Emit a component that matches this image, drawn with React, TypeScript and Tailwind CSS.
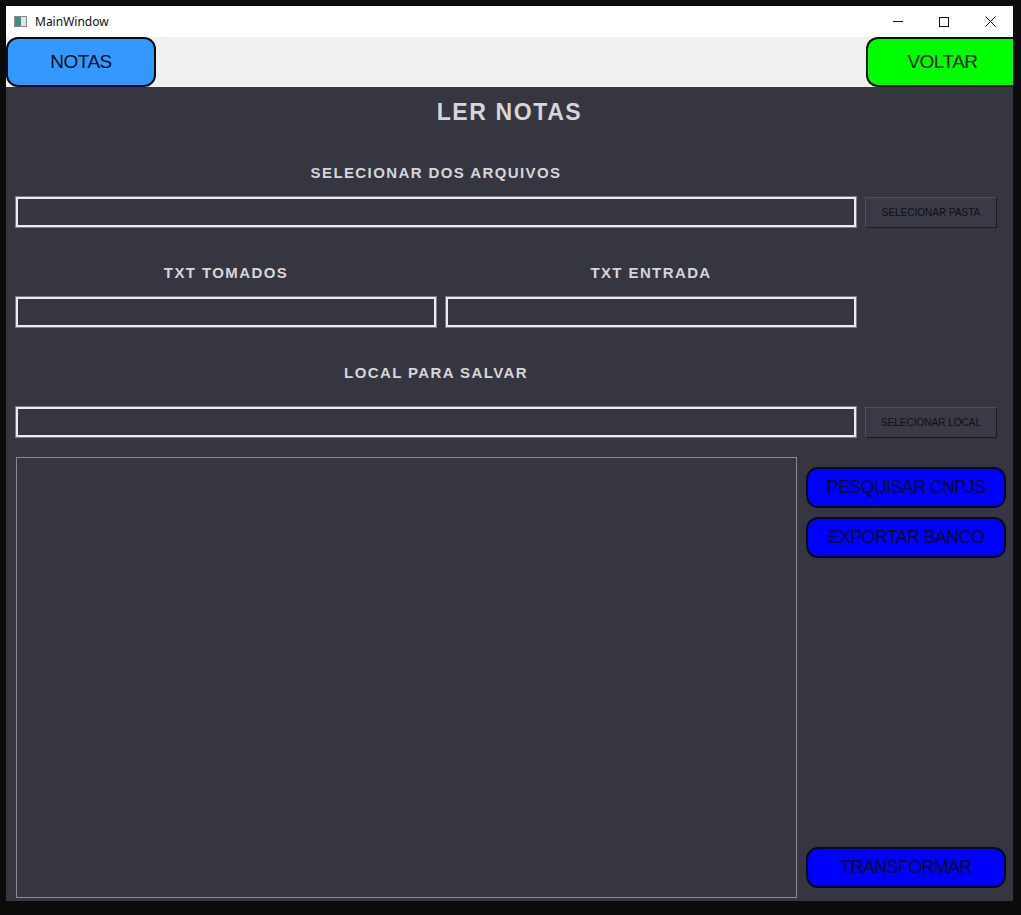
import React from 'react';

const labelCls = "text-[15px] font-bold tracking-[1.4px] text-[#d6d6d8] text-center leading-[26px] h-[26px]";
const inputCls = "h-[30px] shrink-0 bg-[#363641] border-2 border-[#ececec] outline outline-1 outline-[#7c7c82]";
const smallBtn = "w-[132px] h-[31px] shrink-0 bg-[#3a3a46] border border-t-[#4e4e5a] border-l-[#4e4e5a] border-b-[#1c1c22] border-r-[#1c1c22] text-[10px] text-[#111] flex items-center justify-center";
const blueBtn = "w-[200px] h-[41px] shrink-0 bg-[#0000ff] border-2 border-[#0a0a1a] rounded-[12px] text-[18px] tracking-[-0.7px] whitespace-nowrap text-[#0b0b2a] flex items-center justify-center";

const App: React.FC = () => {
    return (
        <div className="w-[1021px] h-[915px] bg-[#0b0b0c] pl-[6px] pt-[6px] overflow-hidden" style={{ fontFamily: '"Liberation Sans", Arial, sans-serif' }}>
            <div className="w-[1007px] flex flex-col">
                {/* Title bar */}
                <div className="h-[31px] bg-white flex items-center">
                    <div className="ml-[8px] w-[13px] h-[11px] border border-[#8a8a8a] bg-[#d8e4e8] flex">
                        <div className="w-[6px] h-full bg-[#3f8f84]" />
                    </div>
                    <span className="ml-[8px] text-[12px] text-[#111]" style={{ fontFamily: '"Noto Sans", "Liberation Sans", sans-serif' }}>MainWindow</span>
                    <div className="ml-auto flex items-center h-full">
                        <div className="w-[46px] h-full flex items-center justify-center">
                            <div className="w-[10px] h-[1px] bg-[#111]" />
                        </div>
                        <div className="w-[46px] h-full flex items-center justify-center">
                            <div className="w-[10px] h-[10px] border border-[#111]" />
                        </div>
                        <div className="w-[46px] h-full flex items-center justify-center">
                            <svg width="11" height="11" viewBox="0 0 11 11">
                                <path d="M0.5 0.5 L10.5 10.5 M10.5 0.5 L0.5 10.5" stroke="#111" strokeWidth="1" />
                            </svg>
                        </div>
                    </div>
                </div>

                {/* Toolbar */}
                <div className="h-[50px] bg-[#f0f0f0] flex justify-between">
                    <button className="w-[150px] h-[50px] bg-[#3399ff] border-2 border-[#0a0a14] rounded-[12px] text-[19px] tracking-[-0.5px] text-[#0b0b20] flex items-center justify-center">NOTAS</button>
                    <button className="w-[147px] h-[50px] bg-[#00ff00] border-2 border-r-0 border-[#0a140a] rounded-l-[12px] text-[19px] tracking-[-0.5px] text-[#0b200b] flex items-center justify-center pl-[4px]">VOLTAR</button>
                </div>

                {/* Body */}
                <div className="h-[814px] bg-[#363641] pl-[10px] pr-[6px] flex flex-col">
                    <div className="h-[50px] flex items-center justify-center pr-[4px] text-[23px] font-bold tracking-[1.6px] text-[#d6d6d8]">LER NOTAS</div>

                    <div className={`mt-[23px] w-[840px] ${labelCls}`}>SELECIONAR DOS ARQUIVOS</div>
                    <div className="mt-[11px] flex gap-[9px] items-start">
                        <div className={`w-[840px] ${inputCls}`} />
                        <button className={smallBtn}>SELECIONAR PASTA</button>
                    </div>

                    <div className="mt-[32px] flex gap-[10px] w-[840px]">
                        <div className={`w-[420px] ${labelCls}`}>TXT TOMADOS</div>
                        <div className={`w-[410px] ${labelCls}`}>TXT ENTRADA</div>
                    </div>
                    <div className="mt-[11px] flex gap-[10px] w-[840px]">
                        <div className={`w-[420px] ${inputCls}`} />
                        <div className={`w-[410px] ${inputCls}`} />
                    </div>

                    <div className={`mt-[33px] w-[840px] ${labelCls}`}>LOCAL PARA SALVAR</div>
                    <div className="mt-[21px] flex gap-[9px] items-start">
                        <div className={`w-[840px] ${inputCls}`} />
                        <button className={smallBtn}>SELECIONAR LOCAL</button>
                    </div>

                    <div className="mt-[19px] flex gap-[9px]">
                        <div className="w-[781px] h-[441px] shrink-0 border border-[#8a8a90] bg-[#363641]" />
                        <div className="flex flex-col pt-[10px] pb-[10px] h-[441px]">
                            <button className={blueBtn}>PESQUISAR CNPJS</button>
                            <button className={`mt-[9px] ${blueBtn}`}>EXPORTAR BANCO</button>
                            <button className={`mt-auto ${blueBtn}`}>TRANSFORMAR</button>
                        </div>
                    </div>
                </div>
            </div>
        </div>
    );
};

export default App;
